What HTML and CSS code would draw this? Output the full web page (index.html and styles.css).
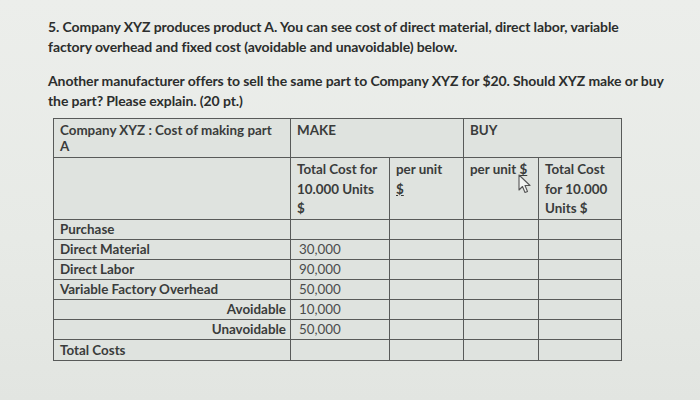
FILE: index.html
```html
<!DOCTYPE html>
<html>
<head>
<meta charset="utf-8">
<link rel="stylesheet" href="styles.css">
</head>
<body>
<div class="page">
  <p class="q">5. Company XYZ produces product A. You can see cost of direct material, direct labor, variable<br>factory overhead and fixed cost (avoidable and unavoidable) below.</p>
  <p class="q q2">Another manufacturer offers to sell the same part to Company XYZ for $20. Should XYZ make or buy<br>the part? Please explain. (20 pt.)</p>
  <div class="tablewrap">
    <table class="cost">
      <colgroup>
        <col class="c1"><col class="c2"><col class="c3"><col class="c4"><col class="c5">
      </colgroup>
      <tr class="r1">
        <td>Company XYZ : Cost of making part<br>A</td>
        <td colspan="2">MAKE</td>
        <td colspan="2">BUY</td>
      </tr>
      <tr class="r2">
        <td></td>
        <td>Total Cost for<br>10.000 Units<br>$</td>
        <td>per unit<br><span class="u">$</span></td>
        <td>per unit <span class="u">$</span></td>
        <td>Total Cost<br>for 10.000<br>Units $</td>
      </tr>
      <tr class="r"><td>Purchase</td><td></td><td></td><td></td><td></td></tr>
      <tr class="r"><td>Direct Material</td><td class="n">30,000</td><td></td><td></td><td></td></tr>
      <tr class="r"><td>Direct Labor</td><td class="n">90,000</td><td></td><td></td><td></td></tr>
      <tr class="r"><td>Variable Factory Overhead</td><td class="n">50,000</td><td></td><td></td><td></td></tr>
      <tr class="r"><td class="right">Avoidable</td><td class="n">10,000</td><td></td><td></td><td></td></tr>
      <tr class="r"><td class="right">Unavoidable</td><td class="n">50,000</td><td></td><td></td><td></td></tr>
      <tr class="r last"><td>Total Costs</td><td></td><td></td><td></td><td></td></tr>
    </table>
    <svg class="cursor" width="14" height="20" viewBox="0 0 14 20">
      <path d="M1 1 L1 16 L4.5 12.5 L7 18.5 L9.5 17.5 L7 11.5 L12 11.5 Z" fill="#f2f4f2" stroke="#555" stroke-width="1.1" stroke-linejoin="round"/>
    </svg>
  </div>
</div>
</body>
</html>
```

FILE: styles.css
```css
html, body {
  margin: 0;
  padding: 0;
}
body {
  width: 700px;
  height: 400px;
  overflow: hidden;
  background: linear-gradient(180deg, #eceeeb 0%, #e7eae6 60%, #e2e5e1 100%);
  font-family: Lato, "Open Sans", "Liberation Sans", sans-serif;
  color: #2e302f;
}
.page {
  padding: 17px 0 0 48px;
}
.q {
  margin: 0;
  font-size: 14px;
  line-height: 20px;
  font-weight: 700;
  letter-spacing: -0.1px;
  color: #2c2e2d;
}
.q2 {
  margin-top: 14px;
}
.tablewrap {
  position: relative;
  margin: 7px 0 0 5px;
}
.cost {
  border-collapse: collapse;
  table-layout: fixed;
  width: 568px;
  background: #dfe3df;
  font-size: 13.4px;
  font-weight: 700;
  color: #3a3c3b;
}
.c1 { width: 237px; }
.c2 { width: 99px; }
.c3 { width: 74px; }
.c4 { width: 75px; }
.c5 { width: 83px; }
.cost td {
  border: 1.5px solid #585a59;
  padding: 0 6px;
  vertical-align: top;
  white-space: nowrap;
  overflow: hidden;
}
.r1 td {
  height: 35px;
  line-height: 16px;
  padding-top: 3px;
}
.r2 td {
  height: 58px;
  line-height: 19.5px;
  padding-top: 2px;
}
.r td {
  height: 18.5px;
  line-height: 19px;
}
.r.last td {
  height: 16.5px;
  line-height: 20px;
}
.cost td.n {
  font-weight: 400;
  color: #4a4c4b;
  padding-left: 8px;
}
.cost td.right {
  text-align: right;
  padding-right: 4px;
}
.u {
  text-decoration: underline;
}
.cursor {
  position: absolute;
  left: 465px;
  top: 56px;
}
```
